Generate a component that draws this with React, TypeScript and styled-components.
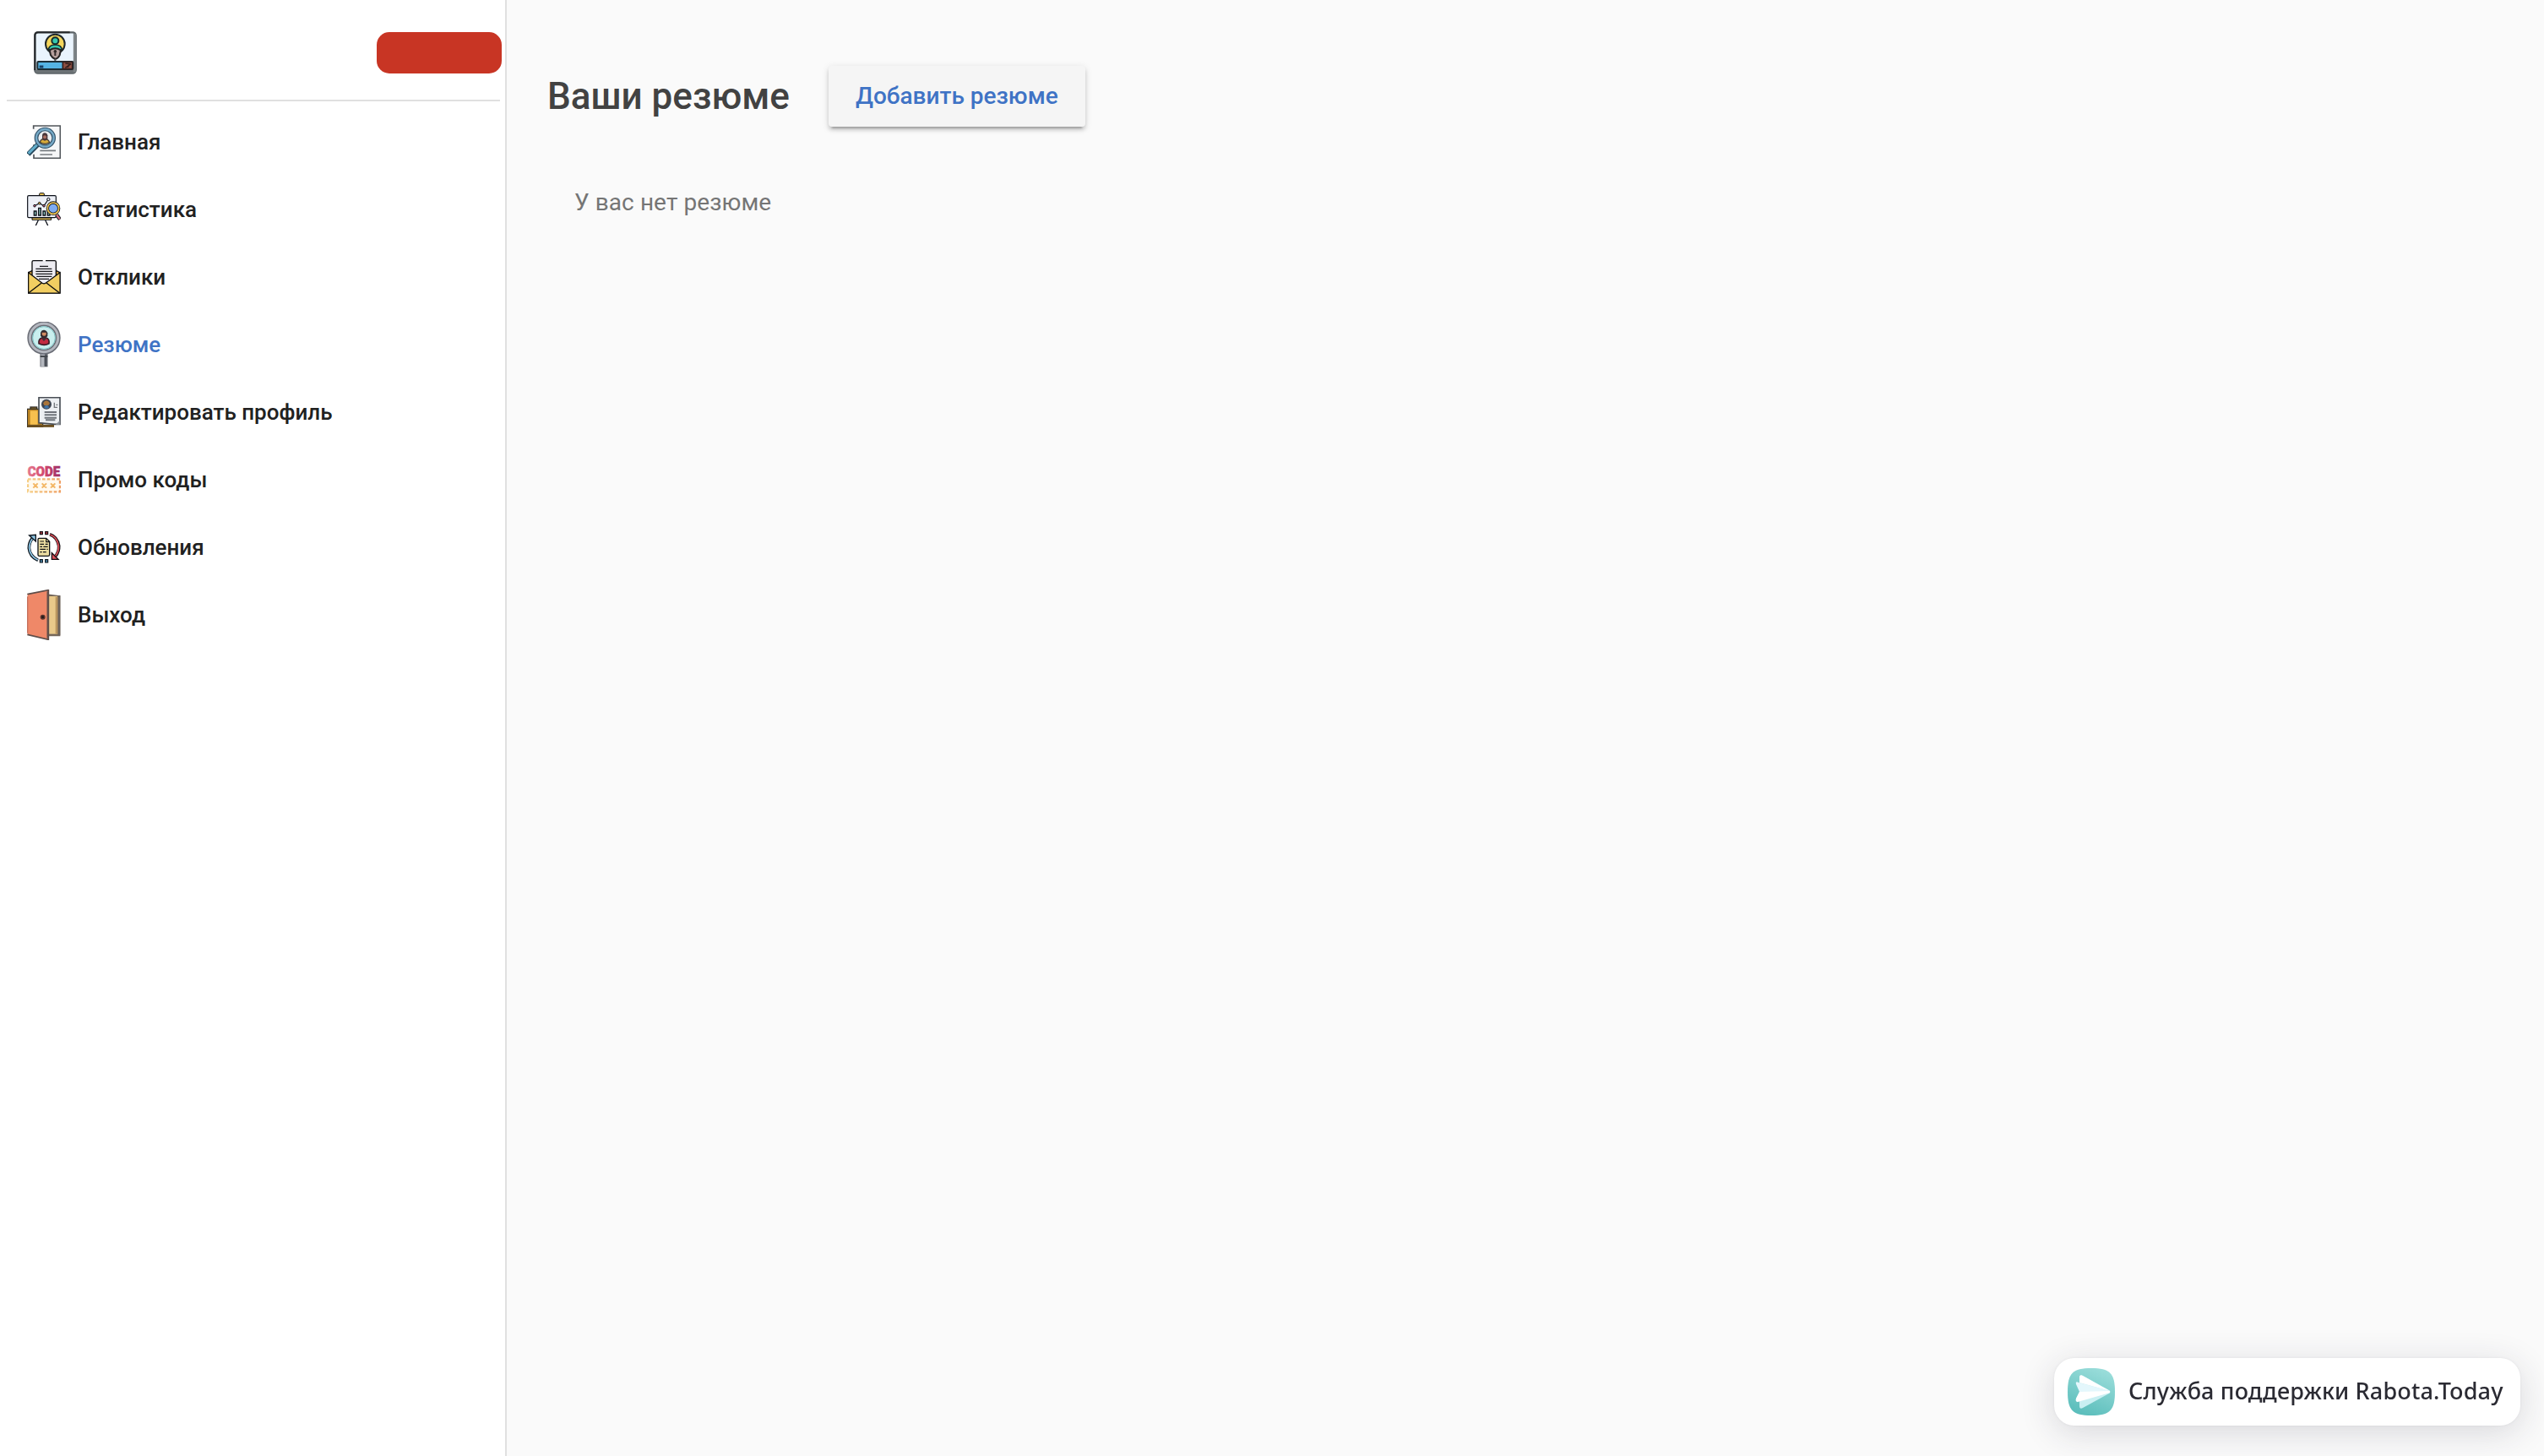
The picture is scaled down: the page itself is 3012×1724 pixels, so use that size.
import React from 'react';
import styled, { createGlobalStyle } from 'styled-components';

const GlobalStyle = createGlobalStyle`
  * { box-sizing: border-box; }
  body {
    margin: 0;
    background: #fafafa;
    font-family: Roboto, "Liberation Sans", sans-serif;
  }
`;

const Layout = styled.div`
  display: flex;
  height: 100vh;
  overflow: hidden;
`;

const Sidebar = styled.aside`
  flex: none;
  width: 600px;
  background: #fff;
  border-right: 2px solid #e0e0e0;
`;

const SidebarHeader = styled.header`
  display: flex;
  justify-content: space-between;
  align-items: center;
  height: 120px;
  margin: 0 6px 0 8px;
  padding: 7px 0 0 32px;
  border-bottom: 2px solid #e0e0e0;
`;

const AccountTag = styled.div`
  width: 148px;
  height: 49px;
  margin-right: -2px;
  border-radius: 15px;
  background: #c83524;
`;

const Nav = styled.nav`
  display: flex;
  flex-direction: column;
  padding-top: 8px;
`;

const NavItem = styled.a<{ $active?: boolean }>`
  display: flex;
  align-items: center;
  gap: 20px;
  height: 80px;
  padding-left: 32px;
  font-size: 26px;
  font-weight: 500;
  color: ${p => (p.$active ? '#3f73c5' : '#212121')};
  text-decoration: none;
  white-space: nowrap;
`;

const Icon = styled.svg<{ $w?: number; $h: number }>`
  flex: none;
  display: block;
  width: ${p => p.$w ?? 40}px;
  height: ${p => p.$h}px;
`;

const Main = styled.main`
  flex: 1;
  padding: 78px 48px;
`;

const TitleRow = styled.div`
  display: flex;
  align-items: center;
  gap: 46px;
  height: 72px;
`;

const Title = styled.h1`
  margin: 0;
  font-size: 44px;
  font-weight: 500;
  color: #424242;
  white-space: nowrap;
`;

const AddButton = styled.button`
  width: 304px;
  height: 72px;
  padding: 0 0 2px;
  border: 0;
  border-radius: 4px;
  background: #f5f5f5;
  color: #3f73c5;
  font: 500 28px Roboto, "Liberation Sans", sans-serif;
  box-shadow: 0 6px 2px -4px rgba(0, 0, 0, 0.2), 0 4px 4px 0 rgba(0, 0, 0, 0.14), 0 2px 10px 0 rgba(0, 0, 0, 0.12);
`;

const EmptyText = styled.p`
  margin: 73px 0 0 32px;
  font-size: 28px;
  line-height: 34px;
  letter-spacing: 0.08px;
  color: #757575;
`;

const SupportButton = styled.button`
  position: fixed;
  right: 28px;
  bottom: 36px;
  display: flex;
  align-items: center;
  gap: 16px;
  width: 552px;
  height: 80px;
  padding: 0 0 0 16px;
  border: 0;
  border-radius: 24px;
  background: #fff;
  color: #2b2b33;
  font: 500 27px "Noto Sans", "Open Sans", sans-serif;
  letter-spacing: 0.15px;
  white-space: nowrap;
  box-shadow: 0 8px 40px rgba(40, 40, 60, 0.16), 0 0 4px rgba(40, 40, 60, 0.06);
`;

const SupportLabel = styled.span`
  padding-bottom: 3px;
`;

const LogoIcon = () => (
  <Icon $w={51} $h={51} viewBox="0 0 153 153">
    <rect x="4" y="4" width="145" height="145" rx="11" fill="#eaf4fd" stroke="#5c6367" strokeWidth="7" />
    <path d="M4 138V15Q4 4 15 4H128" fill="none" stroke="#25282a" strokeWidth="6" />
    <path d="M6 142H147" stroke="#6d7376" strokeWidth="12" />
    <path d="M145 8V145" stroke="#7f8588" strokeWidth="9" />
    <circle cx="76" cy="45" r="34" fill="#f4d65c" stroke="#20282b" strokeWidth="6" />
    <path d="M52 66Q54 48 76 48T100 66Z" fill="#37c9af" stroke="#172b2d" strokeWidth="5" />
    <circle cx="76" cy="34" r="12" fill="#37c9af" stroke="#172b2d" strokeWidth="6" />
    <path d="M56 67Q76 55 96 67L92 85Q86 97 76 99Q66 96 60 85Z" fill="#b59f9c" stroke="#252323" strokeWidth="6" />
    <path d="M76 66V87M71 72H81" stroke="#342c2b" strokeWidth="6" />
    <path d="M76 98V108" stroke="#555" strokeWidth="6" />
    <rect x="13" y="108" width="126" height="27" rx="3" fill="#55b4e4" stroke="#1c2e36" strokeWidth="6" />
    <rect x="103" y="109" width="34" height="25" fill="#8f4f42" stroke="#35201f" strokeWidth="5" />
    <path d="M112 114L128 116L120 128M112 130L132 116" fill="none" stroke="#35201f" strokeWidth="5" />
    <path d="M20 126H34" stroke="#183f63" strokeWidth="9" />
  </Icon>
);

const HomeIcon = () => (
  <Icon $h={40} viewBox="0 0 120 120">
    <path d="M24 2H118V118H24Z" fill="#f6f7f8" />
    <path d="M23 14V3H118V118H24V104M24 80V70" fill="none" stroke="#51565a" strokeWidth="5" />
    <path d="M46 91H102M46 105H90" stroke="#777c80" strokeWidth="5" />
    <path d="M4 104L38 70" stroke="#25465a" strokeWidth="17" />
    <path d="M5 101L36 70" stroke="#63adca" strokeWidth="9" />
    <circle cx="64" cy="46" r="31" fill="#e9edf0" stroke="#35546a" strokeWidth="14" />
    <circle cx="64" cy="46" r="31" fill="none" stroke="#76aac8" strokeWidth="7" />
    <path d="M46 62Q48 49 62 49T80 62Q64 72 46 62Z" fill="#d8ac3b" stroke="#453d32" strokeWidth="4" />
    <path d="M54 52V37Q55 28 63 28T73 37V52L63 56Z" fill="#49363a" />
    <circle cx="63" cy="43" r="6" fill="#a96e61" />
  </Icon>
);

const StatsIcon = () => (
  <Icon $h={40} viewBox="0 0 120 120">
    <rect x="44" y="2" width="17" height="10" rx="3" fill="#f1c653" stroke="#0c1018" strokeWidth="3" />
    <path d="M40 98L31 117M65 98L74 117" stroke="#0c1018" strokeWidth="4" />
    <rect x="2" y="11" width="101" height="78" rx="4" fill="#edf0f7" stroke="#0c1018" strokeWidth="3.5" />
    <path d="M18 90H86V97H18Z" fill="#f1c653" stroke="#0c1018" strokeWidth="3" />
    <path d="M27 47L44 38L60 47L76 24" fill="none" stroke="#0c1018" strokeWidth="3.5" />
    <g fill="#d56f86" stroke="#0c1018" strokeWidth="3">
      <circle cx="27" cy="47" r="4" />
      <circle cx="44" cy="38" r="4" fill="#e7b74a" />
      <circle cx="60" cy="47" r="4" />
      <circle cx="76" cy="24" r="5" fill="#edf0f7" />
    </g>
    <path d="M25 66H33V81H25ZM41 55H49V81H41ZM57 66H65V81H57ZM73 68H81V81H73Z" fill="#8bc5bd" stroke="#0c1018" strokeWidth="4" />
    <path d="M105 79L117 95" stroke="#0c1018" strokeWidth="13" />
    <path d="M105 79L116 94" stroke="#dc717f" strokeWidth="7" />
    <circle cx="93" cy="56" r="20" fill="#7eabf1" stroke="#0c1018" strokeWidth="10" />
    <circle cx="93" cy="56" r="20" fill="none" stroke="#f1c653" strokeWidth="5" />
  </Icon>
);

const MailIcon = () => (
  <Icon $h={40} viewBox="0 0 120 120">
    <path d="M5 44L19 37H103L117 44V117H5Z" fill="#d9a43e" stroke="#0b0b0d" strokeWidth="4" />
    <path d="M19 2H101L103 58L60 86L18 58Z" fill="#edecf1" />
    <path d="M18 56V7Q18 2 23 2H56M66 2H98Q103 2 103 7V56" fill="none" stroke="#0b0b0d" strokeWidth="4" />
    <path d="M5 44L53 81Q60 86 67 81L117 44V117H5Z" fill="#f2ce61" stroke="#0b0b0d" strokeWidth="3.5" />
    <path d="M6 116L52 81M115 116L69 81" stroke="#0b0b0d" strokeWidth="4" />
    <path d="M45 22H75M31 31H88M31 40H90M31 49H90M34 58H88M42 67H78" stroke="#1c1c20" strokeWidth="3.5" />
  </Icon>
);

const ResumeIcon = () => (
  <Icon $h={54} viewBox="0 0 120 162">
    <path d="M60 106V160" stroke="#5c6068" strokeWidth="27" />
    <path d="M56 106V160" stroke="#b4b7be" strokeWidth="14" />
    <path d="M47 123H73" stroke="#43474d" strokeWidth="6" />
    <path d="M65 126V158" stroke="#4a4e56" strokeWidth="7" />
    <circle cx="60" cy="57" r="50" fill="#c9eeee" stroke="#6a6d76" strokeWidth="18" />
    <circle cx="60" cy="57" r="50" fill="none" stroke="#b3b6be" strokeWidth="9" />
    <circle cx="60" cy="57" r="40" fill="none" stroke="#7fc4c6" strokeWidth="3" />
    <path d="M42 77Q40 61 53 57H68Q80 60 78 77Q61 87 42 77Z" fill="#c22a40" stroke="#3b1c27" strokeWidth="5" />
    <path d="M48 50V39Q51 29 60 29T73 40V51L66 58H54Z" fill="#322a30" />
    <path d="M53 38H68V46Q61 55 53 46Z" fill="#d08a62" />
    <path d="M54 58L60 65L67 58" fill="none" stroke="#422d35" strokeWidth="5" />
  </Icon>
);

const ProfileIcon = () => (
  <Icon $h={36} viewBox="0 0 120 108">
    <rect x="12" y="36" width="23" height="12" fill="#8d6a22" stroke="#35312b" strokeWidth="4" />
    <rect x="1" y="43" width="55" height="64" fill="#b98222" stroke="#3c3529" strokeWidth="4" />
    <path d="M11 49H38V104H11Z" fill="#f7c04e" />
    <path d="M2 103H96" stroke="#6b4f20" strokeWidth="9" />
    <path d="M42 2H117V97H98L42 92Z" fill="#edf0f3" stroke="#4a4f56" strokeWidth="5" />
    <path d="M101 99L116 84V99Z" fill="#8d939b" />
    <circle cx="69" cy="26" r="18" fill="#3d4450" />
    <path d="M57 22Q69 4 81 22L76 30H61Z" fill="#a8743a" />
    <path d="M60 37Q69 22 79 37Q69 46 60 37Z" fill="#3f73a8" />
    <path d="M97 20V37H108M103 28H109" fill="none" stroke="#73777c" strokeWidth="4" />
    <path d="M62 54H105M62 64H105M62 74H105M66 82H100" stroke="#6f747b" strokeWidth="6" />
  </Icon>
);

const PromoIcon = () => (
  <Icon $h={44} viewBox="0 -15 120 132">
    <defs>
      <linearGradient id="code" x1="0" x2="1">
        <stop stopColor="#e5788c" />
        <stop offset=".5" stopColor="#d2476c" />
        <stop offset="1" stopColor="#9c2f66" />
      </linearGradient>
      <linearGradient id="ticket" x1="0" x2="1">
        <stop stopColor="#f6cf86" />
        <stop offset="1" stopColor="#ef9f62" />
      </linearGradient>
    </defs>
    <text x="2" y="38" textLength="116" lengthAdjust="spacingAndGlyphs" fill="url(#code)" stroke="url(#code)" strokeWidth="1.5" fontFamily="Roboto" fontWeight="900" fontSize="47">CODE</text>
    <rect x="3" y="49" width="114" height="45" fill="#fffaf0" stroke="url(#ticket)" strokeWidth="7" strokeDasharray="11 6" />
    <path d="M22 64L38 80M38 64L22 80M53 64L69 80M69 64L53 80M84 64L100 80M100 64L84 80" stroke="#f3b765" strokeWidth="6" />
  </Icon>
);

const UpdateIcon = () => (
  <Icon $h={40} viewBox="0 0 120 120">
    <g fill="none">
      <path d="M39 106Q10 93 7 63Q7 42 20 27" stroke="#0c141c" strokeWidth="11" />
      <path d="M38 105Q11 92 8 63Q8 42 21 27" stroke="#8fc6e4" strokeWidth="5.5" />
      <path d="M81 14Q108 23 113 55Q114 76 101 92" stroke="#180f14" strokeWidth="11" />
      <path d="M82 15Q107 23 112 55Q113 76 100 92" stroke="#dc505a" strokeWidth="5.5" />
    </g>
    <path d="M8 18L31 16V39Z" fill="#8fc6e4" stroke="#0c141c" strokeWidth="4" />
    <path d="M88 80V103H111Z" fill="#dc505a" stroke="#180f14" strokeWidth="4" />
    <path d="M46 5H55V14H46ZM65 5H74V14H65Z" fill="#b83c48" stroke="#180f14" strokeWidth="3.5" />
    <path d="M46 104H55V114H46ZM65 104H74V114H65Z" fill="#4f90b5" stroke="#0c141c" strokeWidth="3.5" />
    <path d="M39 32Q39 28 43 28H68L80 40V86Q80 91 75 91H43Q39 91 39 87Z" fill="#ecdda2" stroke="#101215" strokeWidth="4" />
    <path d="M68 29V41H80M46 39H60M46 49H60M65 49H74M46 58H54M58 58H74M46 67H66M70 67H74M46 77H53M57 77H68" fill="none" stroke="#101215" strokeWidth="3.5" />
  </Icon>
);

const ExitIcon = () => (
  <Icon $h={60} viewBox="0 0 120 180">
    <path d="M70 16L118 22V166H70Z" fill="#75675a" />
    <path d="M77 24H108V158H77Z" fill="#e9c98a" />
    <path d="M101 26H110V158H101Z" fill="#b9955f" />
    <path d="M114 21V163" stroke="#6b625b" strokeWidth="8" />
    <path d="M2 16L76 2V178L2 160Z" fill="#ef8868" />
    <path d="M1 17L76 2V178L1 160" fill="none" stroke="#5e4d49" strokeWidth="5" />
    <path d="M2 25V155" stroke="#c5715d" strokeWidth="4" />
    <path d="M74 7V173" stroke="#62504b" strokeWidth="7" />
    <circle cx="56" cy="98" r="9" fill="#59362f" />
    <circle cx="56" cy="98" r="4" fill="#1e1a1a" />
  </Icon>
);

const PlaneIcon = () => (
  <Icon $w={56} $h={56} viewBox="0 0 56 56">
    <defs>
      <linearGradient id="sea" x1=".7" y1="0" x2=".3" y2="1">
        <stop stopColor="#9addda" />
        <stop offset="1" stopColor="#5abdbb" />
      </linearGradient>
    </defs>
    <path d="M0 28C0 6 6 0 28 0S56 6 56 28S50 56 28 56S0 50 0 28Z" fill="url(#sea)" />
    <path d="M14 11Q14 7 18 9L49 26Q52 28 49 30L18 47Q14 49 14 45Z" fill="#c9eff2" />
    <path d="M14 17V11Q14 7 18 9L50 27Z" fill="#fff" />
    <path d="M10 19Q9 15 13 17L50 27V29L12 39Q9 40 10 36L14 28Z" fill="#e4f7fc" />
    <path d="M14 28L50 27V29L12 40Q9 40 10 36Z" fill="#fff" />
  </Icon>
);

const items = [
  { label: 'Главная', icon: <HomeIcon /> },
  { label: 'Статистика', icon: <StatsIcon /> },
  { label: 'Отклики', icon: <MailIcon /> },
  { label: 'Резюме', icon: <ResumeIcon />, active: true },
  { label: 'Редактировать профиль', icon: <ProfileIcon /> },
  { label: 'Промо коды', icon: <PromoIcon /> },
  { label: 'Обновления', icon: <UpdateIcon /> },
  { label: 'Выход', icon: <ExitIcon /> },
];

export default function App() {
  return (
    <>
      <GlobalStyle />
      <Layout>
        <Sidebar>
          <SidebarHeader>
            <LogoIcon />
            <AccountTag />
          </SidebarHeader>
          <Nav>
            {items.map(item => (
              <NavItem key={item.label} $active={item.active}>
                {item.icon}
                <span>{item.label}</span>
              </NavItem>
            ))}
          </Nav>
        </Sidebar>
        <Main>
          <TitleRow>
            <Title>Ваши резюме</Title>
            <AddButton>Добавить резюме</AddButton>
          </TitleRow>
          <EmptyText>У вас нет резюме</EmptyText>
        </Main>
        <SupportButton>
          <PlaneIcon />
          <SupportLabel>Служба поддержки Rabota.Today</SupportLabel>
        </SupportButton>
      </Layout>
    </>
  );
}
